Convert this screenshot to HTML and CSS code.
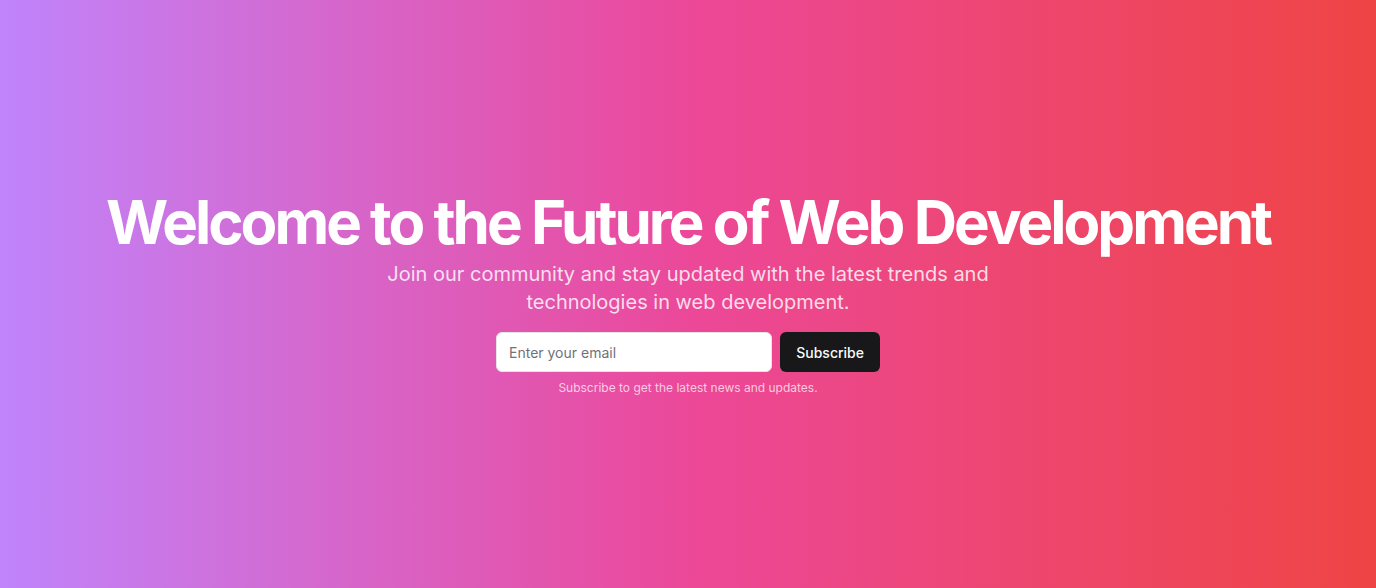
FILE: index.html
```html
<!DOCTYPE html>
<html lang="en">
<head>
<meta charset="utf-8">
<title>Welcome</title>
<link rel="stylesheet" href="styles.css">
</head>
<body>
<section class="hero">
  <div class="content">
    <div class="intro">
      <h1 class="title">Welcome to the Future of Web Development</h1>
      <p class="lead">Join our community and stay updated with the latest trends and technologies in web development.</p>
    </div>
    <div class="signup">
      <form class="form">
        <input class="email" type="email" placeholder="Enter your email">
        <button class="btn" type="submit">Subscribe</button>
      </form>
      <p class="note">Subscribe to get the latest news and updates.</p>
    </div>
  </div>
</section>
</body>
</html>
```
FILE: styles.css
```css
* { box-sizing: border-box; }
html, body { margin: 0; padding: 0; }
body {
  font-family: Inter, "Noto Sans", sans-serif;
}
.hero {
  height: 588px;
  width: 100%;
  background: linear-gradient(to right, #c084fc, #ec4899, #ef4444);
  display: flex;
  align-items: center;
  justify-content: center;
  padding: 0 16px;
}
.content {
  display: flex;
  flex-direction: column;
  align-items: center;
  gap: 16px;
  text-align: center;
}
.intro {
  display: flex;
  flex-direction: column;
  align-items: center;
  gap: 8px;
}
.title {
  margin: 0;
  font-size: 60px;
  line-height: 1;
  font-weight: 700;
  letter-spacing: -0.05em;
  color: #fff;
}
.lead {
  margin: 0;
  max-width: 672px;
  font-size: 20px;
  line-height: 28px;
  color: rgba(255, 255, 255, 0.82);
}
.signup {
  width: 384px;
  display: flex;
  flex-direction: column;
  gap: 8px;
}
.form {
  display: flex;
  gap: 8px;
  margin: 0;
}
.email {
  flex: 1;
  min-width: 0;
  height: 40px;
  border: 1px solid #e4e4e7;
  border-radius: 6px;
  background: #fff;
  padding: 8px 12px;
  font-family: inherit;
  font-size: 14px;
  color: #111;
  outline: none;
}
.email::placeholder { color: #71717a; }
.btn {
  height: 40px;
  padding: 0 16px;
  border: 0;
  border-radius: 6px;
  background: #18181b;
  color: #fafafa;
  font-family: inherit;
  font-size: 14px;
  font-weight: 500;
}
.note {
  margin: 0;
  font-size: 12px;
  line-height: 16px;
  color: rgba(255, 255, 255, 0.72);
}
```
